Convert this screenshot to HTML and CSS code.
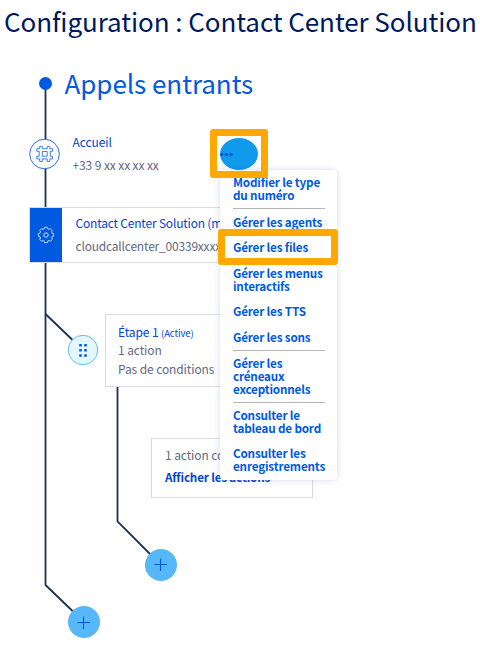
FILE: index.html
```html
<!DOCTYPE html>
<html lang="fr">
<head>
<meta charset="utf-8">
<title>Configuration : Contact Center Solution</title>
<link rel="stylesheet" href="styles.css">
</head>
<body>
<h1 class="title"><span>Configuration : Contact Center Solution</span></h1>
<main class="diagram">
  <svg class="links" width="480" height="646" viewBox="0 0 480 646" fill="none" stroke="#1b3252" stroke-width="1.8">
    <path d="M45.5 84V585L84 622"/>
    <path d="M45.5 314L83 350"/>
    <path d="M117.500 380V521.500L161 565"/>
    <circle cx="45.500" cy="83.500" r="6.500" fill="#005ae0" stroke="none"/>
  </svg>
  <h2 class="section"><span>Appels entrants</span></h2>

  <svg class="node number-icon" width="32" height="32" viewBox="0 0 32 32" fill="none" stroke="#2a72e2" stroke-width="1">
    <circle cx="15.500" cy="16" r="14.800" fill="#fff"/>
    <path stroke-width=".9" d="M10.700 8.300h2.600v2.400h4.900V8.300h2.600v2.400h2.800v2.600h-2.300v5h2.300v2.600h-2.800v2.600h-2.600v-2.600h-4.900v2.600h-2.600v-2.600H7.800v-2.600h2.400v-5H7.800v-2.600h2.900zM13.300 13.500h4.900v4.700h-4.900z"/>
  </svg>
  <div class="node welcome">
    <p class="link"><span>Accueil</span></p>
    <p><span>+33 9 xx xx xx xx</span></p>
  </div>

  <section class="node card solution">
    <div class="tile">
      <svg width="18" height="18" viewBox="0 0 18 18" fill="none" stroke="#c3dcff" stroke-width="1" stroke-linejoin="round">
        <path d="M7.300 2.800 7.700 1.300h2.600l.4 1.500 1.300.6 1.400-.8 1.900 1.900-.8 1.400.6 1.300 1.400.5v2.600l-1.500.4-.5 1.300.8 1.400-1.900 1.900-1.400-.8-1.300.6-.4 1.500H7.700l-.4-1.500-1.300-.6-1.400.8-1.900-1.900.8-1.400-.6-1.300-1.500-.4V7.700l1.500-.5.6-1.300-.8-1.400 1.900-1.900 1.400.8z"/>
        <circle cx="9" cy="9" r="2.200"/>
      </svg>
    </div>
    <div class="solution-text">
      <p class="link"><span>Contact Center Solution (m</span></p>
      <p><span>cloudcallcenter_00339xxxx</span></p>
    </div>
  </section>

  <svg class="node step-icon" width="32" height="32" viewBox="0 0 32 32">
    <circle cx="16" cy="16" r="14.700" fill="#e5f7fe" stroke="#66bdf7"/>
    <path fill="#005ae0" d="M12.200 10h2.600v2.600h-2.600zM17.200 10h2.600v2.600h-2.600zM12.200 15h2.600v2.600h-2.600zM17.200 15h2.600v2.600h-2.600zM12.200 20.200h2.600v2.600h-2.600zM17.200 20.200h2.600v2.600h-2.600z"/>
  </svg>
  <section class="node card step">
    <p class="link"><span>Étape 1 <small>(Active)</small></span></p>
    <p><span>1 action</span></p>
    <p><span>Pas de conditions</span></p>
  </section>

  <section class="node card actions">
    <p><span>1 action configurée</span></p>
    <p class="link strong"><span>Afficher les actions</span></p>
  </section>

  <svg class="node add add-step" width="32" height="32" viewBox="0 0 32 32"><circle cx="16" cy="16" r="16" fill="#57b8f9"/><path d="M9.500 15.500h12.500M15.500 9.500v12.500" stroke="#005ae0" stroke-width="1.100"/></svg>
  <svg class="node add add-root" width="32" height="32" viewBox="0 0 32 32"><circle cx="16" cy="16" r="16" fill="#57b8f9"/><path d="M9.500 16.500h12.500M15.500 10.500v12.500" stroke="#005ae0" stroke-width="1.100"/></svg>

  <svg class="node more" width="38" height="32" viewBox="0 0 38 32"><ellipse cx="19" cy="16" rx="19" ry="16" fill="#0f9aeb"/><g fill="#0050d7"><circle cx="1.700" cy="16.500" r="1.600"/><circle cx="6.300" cy="16.500" r="1.600"/><circle cx="10.900" cy="16.500" r="1.600"/></g></svg>

  <ul class="menu">
    <li><span>Modifier le type<br>du numéro</span></li>
    <li class="group"><span>Gérer les agents</span></li>
    <li><span>Gérer les files</span></li>
    <li><span>Gérer les menus<br>interactifs</span></li>
    <li><span>Gérer les TTS</span></li>
    <li><span>Gérer les sons</span></li>
    <li class="group"><span>Gérer les<br>créneaux<br>exceptionnels</span></li>
    <li class="group"><span>Consulter le<br>tableau de bord</span></li>
    <li><span>Consulter les<br>enregistrements</span></li>
  </ul>
  <div class="highlight highlight-more"></div>
  <div class="highlight highlight-files"></div>
</main>
</body>
</html>
```
FILE: styles.css
```css
* { box-sizing: border-box; }
body {
  margin: 0;
  position: relative;
  height: 646px;
  overflow: hidden;
  background: #fff;
  color: #5f6980;
  font-family: "Noto Sans CJK SC", "Noto Sans", sans-serif;
  font-size: 12px;
  letter-spacing: -.1px;
}
h1, h2, p, ul { margin: 0; padding: 0; }
h1, h2, p, li { white-space: nowrap; }
.title {
  padding-left: 4px;
  font-size: 26px;
  font-weight: 400;
  line-height: 42px;
  letter-spacing: -.07px;
  color: #00185e;
}
.links { position: absolute; left: 0; top: 0; }
.section {
  position: absolute;
  left: 64.5px;
  top: 64px;
  font-size: 26px;
  font-weight: 400;
  line-height: 38px;
  letter-spacing: -.05px;
  color: #005ae0;
}
.node { position: absolute; }
.link { color: #0045d0; }
.strong { font-size: 11.7px; font-weight: 700; letter-spacing: -.18px; }
.number-icon { left: 29px; top: 138px; }
.welcome { left: 72.5px; top: 130px; line-height: 23px; }
.card { border: 1px solid #d8dce2; background: #fff; }
.solution {
  left: 29px;
  top: 207px;
  width: 281px;
  height: 56px;
  display: flex;
}
.tile {
  width: 32px;
  display: flex;
  align-items: center;
  justify-content: center;
  background: #005ae0;
}
.solution-text { padding: 3px 0 0 13.5px; line-height: 23px; letter-spacing: -.2px; }
.step-icon { left: 67px; top: 334px; }
.step {
  left: 105px;
  top: 314px;
  width: 162px;
  height: 73px;
  padding: 7px 12px;
  line-height: 19px;
}
.step p { height: 19px; }
.step p + p { line-height: 17px; }
.step small { font-size: 9.500px; line-height: 1; }
.actions {
  left: 151px;
  top: 438px;
  width: 162px;
  height: 60px;
  padding: 4px 13px;
  line-height: 23px;
}
.actions .strong { line-height: 22px; }
.add-step { left: 145px; top: 549px; }
.add-root { left: 68px; top: 606px; }
.more { left: 220px; top: 138px; }
.menu {
  position: absolute;
  left: 220px;
  top: 170px;
  width: 117px;
  height: 310px;
  padding: 0 12px 0 13px;
  border-radius: 4px;
  background: #fff;
  box-shadow: 0 0 6px rgba(0, 14, 156, .16);
  list-style: none;
  font-size: 11.700px;
  font-weight: 700;
  line-height: 13px;
  letter-spacing: -.18px;
  color: #005ae0;
}
.menu li { padding: 5.600px 0 6.900px; }
.menu li:first-child { padding-top: 5.300px; }
.menu .group { border-top: 1px solid #b5b5b5; }
.menu .group ~ .group { padding-top: 5px; }
.highlight {
  position: absolute;
  border: 7px solid #ffa800;
  border-radius: 3px;
}
.highlight-more { left: 210px; top: 129px; width: 58px; height: 49px; }
.highlight-files { left: 217.500px; top: 229px; width: 120px; height: 36px; }
```
